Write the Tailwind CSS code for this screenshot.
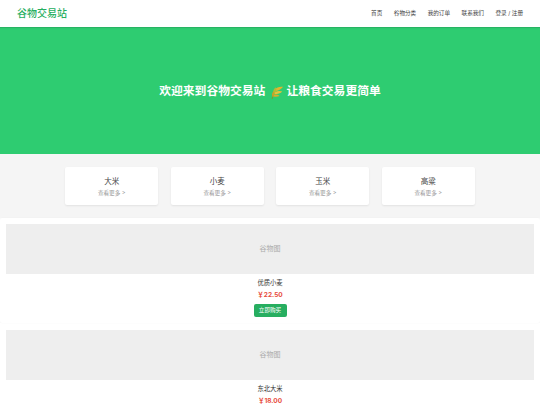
<!DOCTYPE html>
<html lang="zh-CN">
    <head>
        <meta charset="UTF-8" />
        <script src="https://cdn.jsdelivr.net/npm/@tailwindcss/browser@4"></script>
        <title>谷物交易站</title>
    </head>
    <body class="h-[405px] overflow-hidden bg-white font-['Inter','Noto_Sans_CJK_SC',sans-serif] text-[#333]">
        <header class="relative flex h-[27px] items-center justify-between bg-white px-[17px] shadow-[0_1px_1px_rgba(0,0,0,0.12)]">
            <div class="text-[10px] font-medium text-[#27ae60]">谷物交易站</div>
            <nav class="flex gap-[11.500px] text-[5.600px] text-[#444]">
                <a>首页</a>
                <a>谷物分类</a>
                <a>我的订单</a>
                <a>联系我们</a>
                <a>登录 / 注册</a>
            </nav>
        </header>

        <section class="flex h-[127px] items-center justify-center bg-[#2ecc71] pt-[2px]">
            <h1 class="flex items-center text-[11.800px] font-bold text-white">
                <span>欢迎来到谷物交易站</span>
                <svg class="ml-[5px] mr-[2px] h-[14px] w-[14px]" viewBox="0 0 16 16" fill="none">
                    <path d="M2.500 15.500C3 11 4.500 7.500 7 4.500" stroke="#7f9a2c" stroke-width="1.200" stroke-linecap="round" />
                    <path d="M5 5.500C7.500 2.500 11 1.500 15 2C13 4.500 10.500 6 6.500 7Z" fill="#e0b52e" />
                    <path d="M3.500 9C3.500 6.500 4.500 4 6.500 2.500L7.500 6L5 10.500Z" fill="#b5bb34" />
                    <path d="M6 8C8.500 6.500 11.500 6.500 14 7.500C12 9.500 9 10.500 5 10.500Z" fill="#e8c13a" />
                    <path d="M2.500 12.500C2 10.500 2.500 8.500 4 7L5 10L3.500 14Z" fill="#c9a227" />
                    <path d="M4.500 11C7 10.500 9 11 11 12.500C8.500 13.500 6.500 13.500 4 13Z" fill="#d8ae2c" />
                </svg>
                <span>让粮食交易更简单</span>
            </h1>
        </section>

        <section class="flex h-[64px] justify-center gap-[12.500px] bg-[#f5f5f5] pt-[13px]">
            <div class="h-[38px] w-[93px] rounded-[2px] bg-white pt-[9px] text-center shadow-[0_1px_2px_rgba(0,0,0,0.08)]">
                <h3 class="text-[7.500px] leading-[11px] text-[#444]">大米</h3>
                <p class="mt-[2px] text-[5.600px] leading-[8px] text-[#999]">查看更多 &gt;</p>
            </div>
            <div class="h-[38px] w-[93px] rounded-[2px] bg-white pt-[9px] text-center shadow-[0_1px_2px_rgba(0,0,0,0.08)]">
                <h3 class="text-[7.500px] leading-[11px] text-[#444]">小麦</h3>
                <p class="mt-[2px] text-[5.600px] leading-[8px] text-[#999]">查看更多 &gt;</p>
            </div>
            <div class="h-[38px] w-[93px] rounded-[2px] bg-white pt-[9px] text-center shadow-[0_1px_2px_rgba(0,0,0,0.08)]">
                <h3 class="text-[7.500px] leading-[11px] text-[#444]">玉米</h3>
                <p class="mt-[2px] text-[5.600px] leading-[8px] text-[#999]">查看更多 &gt;</p>
            </div>
            <div class="h-[38px] w-[93px] rounded-[2px] bg-white pt-[9px] text-center shadow-[0_1px_2px_rgba(0,0,0,0.08)]">
                <h3 class="text-[7.500px] leading-[11px] text-[#444]">高粱</h3>
                <p class="mt-[2px] text-[5.600px] leading-[8px] text-[#999]">查看更多 &gt;</p>
            </div>
        </section>

        <section class="flex flex-col gap-[1px]">
            <div class="h-[105px] rounded-[2px] bg-white px-[6px] pt-[5.500px] text-center shadow-[0_0_1px_rgba(0,0,0,0.08)]">
                <div class="flex h-[50.500px] items-center justify-center bg-[#eeeeee] text-[7px] text-[#aaa]">谷物图</div>
                <h4 class="mt-[4.500px] text-[6.300px] leading-[9px] text-[#333]">优质小麦</h4>
                <p class="mt-[3px] text-[6.500px] leading-[9px] font-bold text-[#e74c3c]">￥22.50</p>
                <button class="mx-auto mt-[4px] block h-[13px] w-[33px] rounded-[2px] bg-[#27ae60] text-[5.600px] text-white">立即购买</button>
            </div>
            <div class="h-[82px] rounded-t-[2px] bg-white px-[6px] pt-[5.500px] text-center">
                <div class="flex h-[50.500px] items-center justify-center bg-[#eeeeee] text-[7px] text-[#aaa]">谷物图</div>
                <h4 class="mt-[4.500px] text-[6.300px] leading-[9px] text-[#333]">东北大米</h4>
                <p class="mt-[3px] text-[6.500px] leading-[9px] font-bold text-[#e74c3c]">￥18.00</p>
            </div>
        </section>
    </body>
</html>
